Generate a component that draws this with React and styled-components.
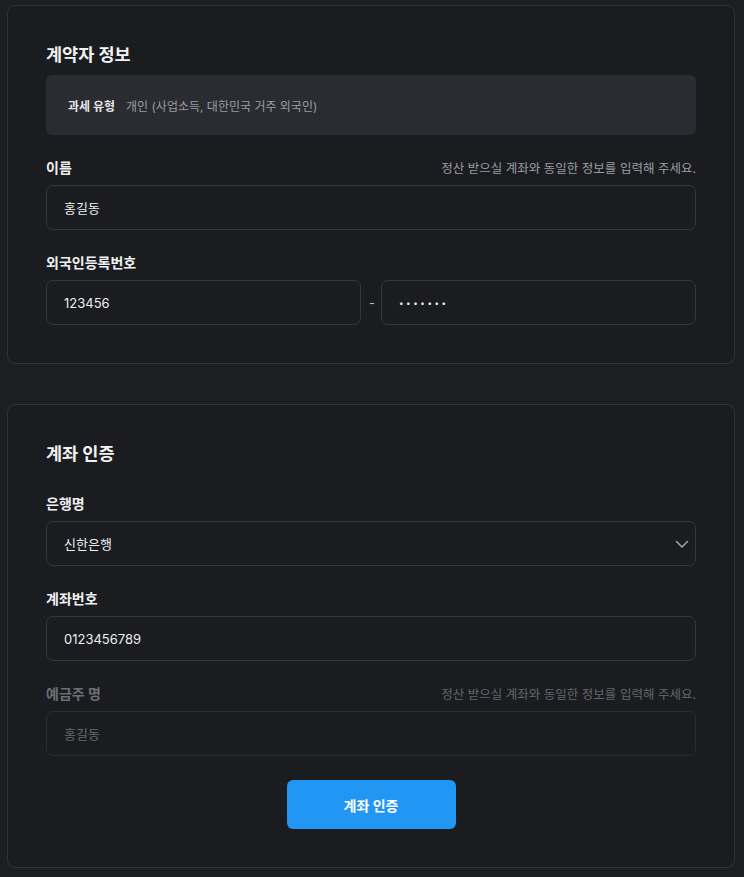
import React from 'react';
import styled, { createGlobalStyle } from 'styled-components';

const GlobalStyle = createGlobalStyle`
  html, body {
    margin: 0;
    background: #1d1e22;
    font-family: Inter, "Noto Sans CJK KR", "Noto Sans", sans-serif;
    color: #e8e9eb;
  }
  * { box-sizing: border-box; }
`;

const Page = styled.div`
  display: flex;
  flex-direction: column;
  gap: 40px;
  padding: 5px 9px 8px 7px;
`;

const Card = styled.section`
  background: #1b1c20;
  border: 1px solid #303237;
  border-radius: 8px;
  padding: 36px 38px 38px;
  display: flex;
  flex-direction: column;
`;

const Title = styled.h2`
  margin: 0 0 7px;
  font-size: 17.5px;
  line-height: 26px;
  font-weight: 700;
  color: #f1f2f4;
`;

const InfoBox = styled.div`
  background: #2a2c31;
  border-radius: 6px;
  height: 60px;
  display: flex;
  align-items: center;
  gap: 11px;
  padding: 0 22px;
  font-size: 12px;
`;

const InfoKey = styled.span`
  font-weight: 700;
  color: #e4e5e7;
`;

const InfoValue = styled.span`
  color: #9a9ca2;
`;

const Field = styled.div`
  margin-top: ${(p) => (p.$first ? 19 : 22)}px;
  display: flex;
  flex-direction: column;
  gap: 8px;
`;

const LabelRow = styled.div`
  display: flex;
  justify-content: space-between;
  align-items: center;
  height: 20px;
`;

const Label = styled.label`
  font-size: 14px;
  font-weight: 700;
  color: ${(p) => (p.$disabled ? '#6c6f75' : '#eff0f2')};
`;

const Hint = styled.span`
  font-size: 12.5px;
  color: ${(p) => (p.$disabled ? '#63666b' : '#9a9da3')};
`;

const Input = styled.input`
  width: 100%;
  height: 45px;
  background: #1b1c20;
  border: 1px solid ${(p) => (p.disabled ? '#2b2d31' : '#35373c')};
  border-radius: 7px;
  padding: 0 17px;
  font-family: inherit;
  font-size: 13px;
  color: ${(p) => (p.disabled ? '#66696e' : '#eceef0')};
  outline: none;
  &::placeholder { color: #66696e; }
  &[type='password'] {
    font-size: 8px;
    letter-spacing: 2.6px;
  }
`;

const SplitRow = styled.div`
  display: flex;
  align-items: center;
  gap: 8px;
`;

const Dash = styled.span`
  font-size: 13px;
  color: #b9bbbf;
  width: 4px;
  text-align: center;
`;

const SelectBox = styled.div`
  height: 45px;
  border: 1px solid #35373c;
  border-radius: 7px;
  padding: 0 5px 0 17px;
  display: flex;
  align-items: center;
  justify-content: space-between;
  font-size: 13px;
  color: #eceef0;
`;

const Button = styled.button`
  align-self: center;
  margin-top: 24px;
  width: 169px;
  height: 49px;
  background: #2196f3;
  border: none;
  border-radius: 6px;
  color: #fff;
  font-family: inherit;
  font-size: 14px;
  font-weight: 700;
  cursor: pointer;
`;

const Chevron = () => (
  <svg width="16" height="16" viewBox="0 0 16 16" fill="none" stroke="#a2a4a9" strokeWidth="1.5" strokeLinecap="round" strokeLinejoin="round">
    <path d="M2.5 5.5L8 11l5.5-5.5" />
  </svg>
);

const HINT = '정산 받으실 계좌와 동일한 정보를 입력해 주세요.';

export default function App() {
  return (
    <>
      <GlobalStyle />
      <Page>
        <Card>
          <Title>계약자 정보</Title>
          <InfoBox>
            <InfoKey>과세 유형</InfoKey>
            <InfoValue>개인 (사업소득, 대한민국 거주 외국인)</InfoValue>
          </InfoBox>
          <Field>
            <LabelRow>
              <Label>이름</Label>
              <Hint>{HINT}</Hint>
            </LabelRow>
            <Input readOnly value="홍길동" />
          </Field>
          <Field>
            <LabelRow>
              <Label>외국인등록번호</Label>
            </LabelRow>
            <SplitRow>
              <Input readOnly value="123456" />
              <Dash>-</Dash>
              <Input readOnly type="password" value="1234567" />
            </SplitRow>
          </Field>
        </Card>

        <Card>
          <Title>계좌 인증</Title>
          <Field $first>
            <LabelRow>
              <Label>은행명</Label>
            </LabelRow>
            <SelectBox>
              <span>신한은행</span>
              <Chevron />
            </SelectBox>
          </Field>
          <Field>
            <LabelRow>
              <Label>계좌번호</Label>
            </LabelRow>
            <Input readOnly value="0123456789" />
          </Field>
          <Field>
            <LabelRow>
              <Label $disabled>예금주 명</Label>
              <Hint $disabled>{HINT}</Hint>
            </LabelRow>
            <Input disabled placeholder="홍길동" />
          </Field>
          <Button>계좌 인증</Button>
        </Card>
      </Page>
    </>
  );
}
